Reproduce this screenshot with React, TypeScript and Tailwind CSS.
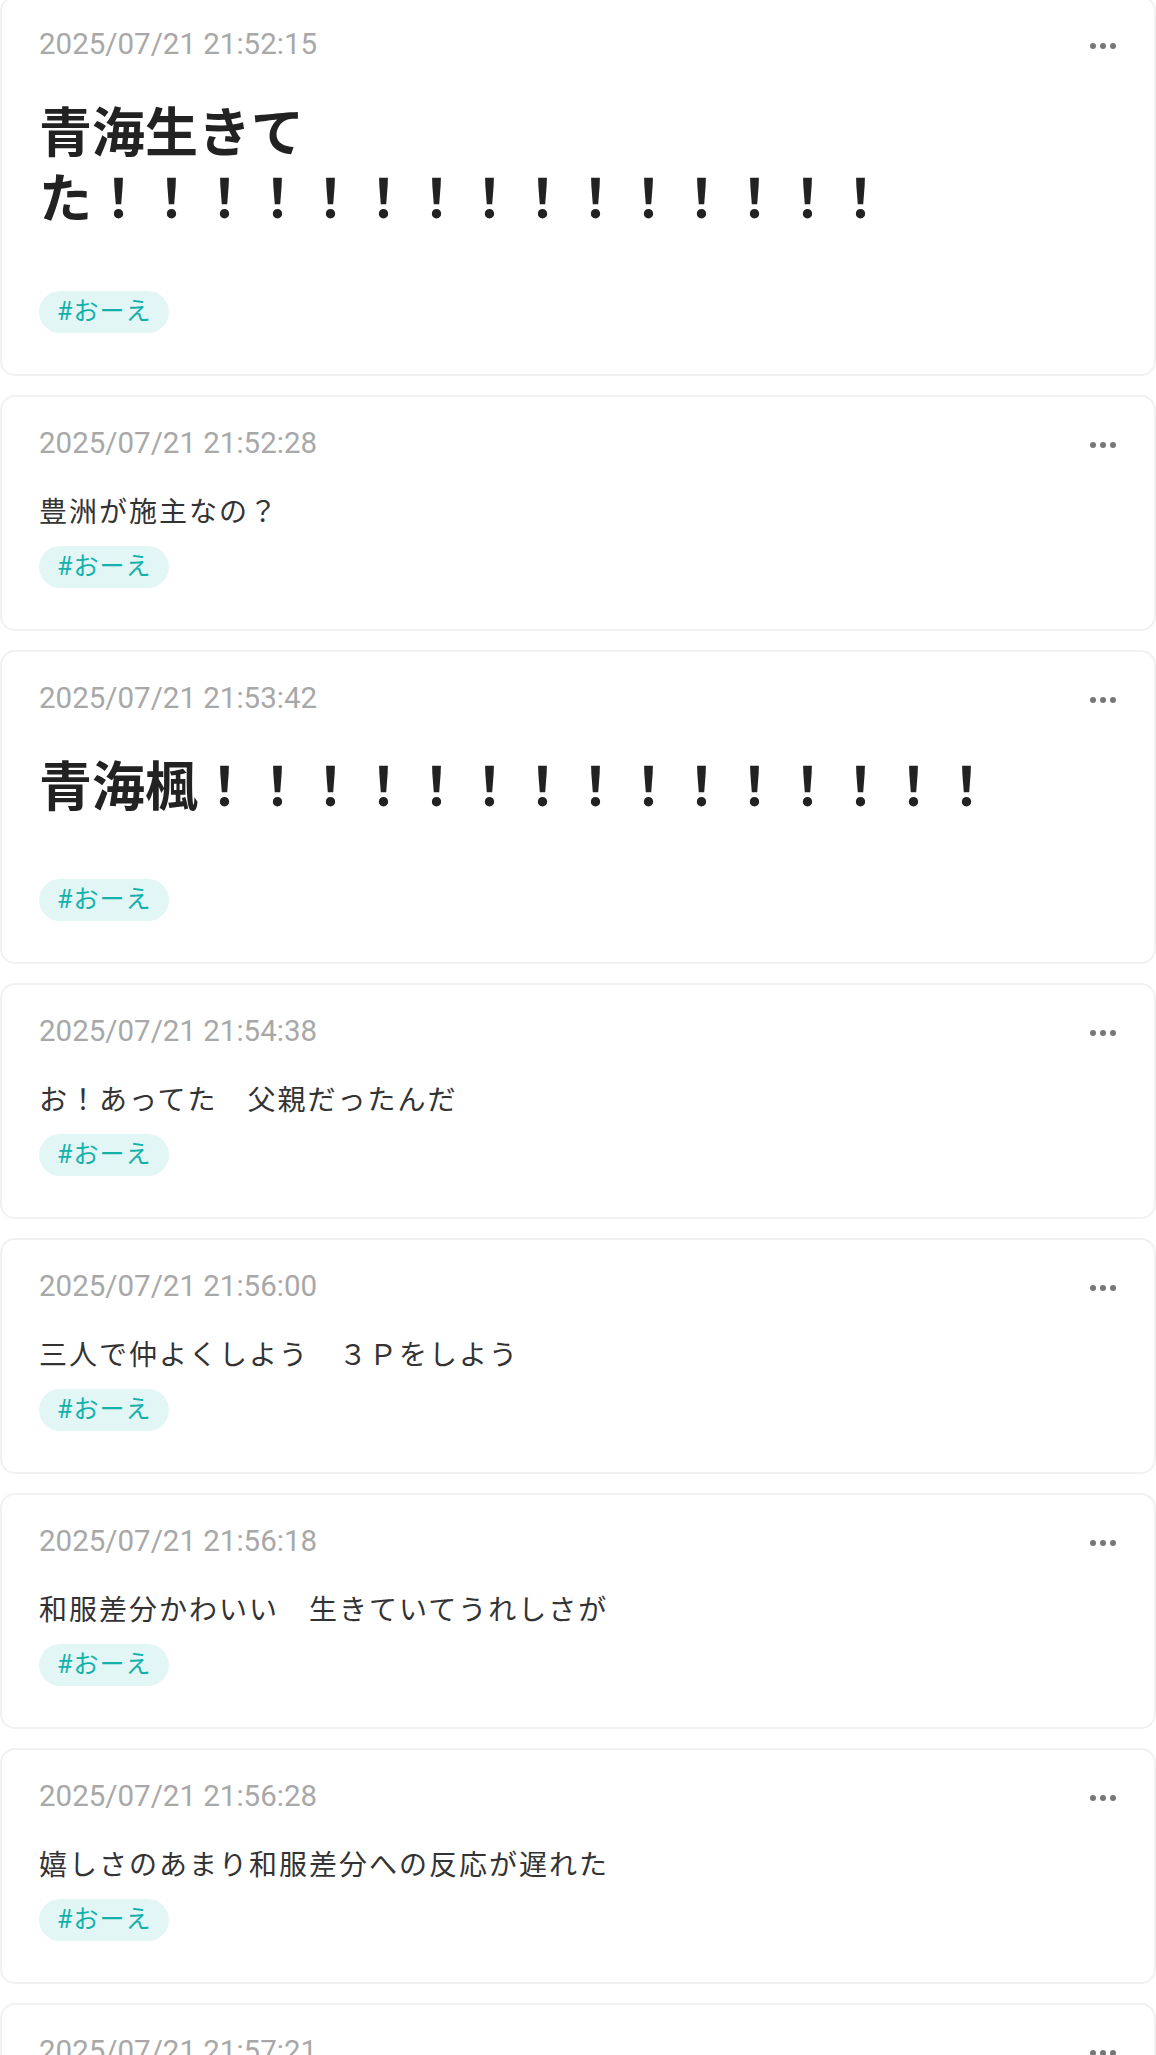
type Post = {
  time: string;
  text: string;
  big?: boolean;
};

const posts: Post[] = [
  { time: "2025/07/21 21:52:15", text: "青海生きてた！！！！！！！！！！！！！！！", big: true },
  { time: "2025/07/21 21:52:28", text: "豊洲が施主なの？" },
  { time: "2025/07/21 21:53:42", text: "青海楓！！！！！！！！！！！！！！！", big: true },
  { time: "2025/07/21 21:54:38", text: "お！あってた　父親だったんだ" },
  { time: "2025/07/21 21:56:00", text: "三人で仲よくしよう　３Ｐをしよう" },
  { time: "2025/07/21 21:56:18", text: "和服差分かわいい　生きていてうれしさが" },
  { time: "2025/07/21 21:56:28", text: "嬉しさのあまり和服差分への反応が遅れた" },
  { time: "2025/07/21 21:57:21", text: "" },
];

function Dots() {
  return (
    <svg width="26" height="8" viewBox="0 0 26 8" className="text-[#777]">
      <circle cx="3" cy="4" r="3" fill="currentColor" />
      <circle cx="13" cy="4" r="3" fill="currentColor" />
      <circle cx="23" cy="4" r="3" fill="currentColor" />
    </svg>
  );
}

function PostCard({ post }: { post: Post }) {
  return (
    <div className="w-full bg-white border-2 border-[#f1f1f1] rounded-[15px] px-[37px] pt-[24px] pb-[41px]">
      {/* Header */}
      <div className="flex items-center justify-between h-[44px]">
        <span className="text-[29.5px] leading-[44px] text-[#a8a8a8]">{post.time}</span>
        <button className="flex items-center h-[44px] pr-[1px] mt-[3px]">
          <Dots />
        </button>
      </div>

      {/* Body */}
      {post.big ? (
        <h1 className="mt-[35px] mb-[47px] text-[53px] leading-[66px] font-bold text-[#222]">
          {post.text}
        </h1>
      ) : (
        <p className="mt-[25px] text-[28px] leading-[45px] tracking-[2px] text-[#333]">{post.text}</p>
      )}

      {/* Tags */}
      <div className="pt-[11px] flex">
        <span className="inline-flex items-center h-[42px] px-[18px] rounded-full bg-[#e3f6f6] text-[#14b1aa] text-[25px] tracking-[1px]">
          #おーえ
        </span>
      </div>
    </div>
  );
}

export default function App() {
  return (
    <div
      className="w-[1156px] h-[2055px] overflow-hidden bg-white"
      style={{ fontFamily: "Roboto, 'Noto Sans CJK JP', sans-serif" }}
    >
      <div className="-mt-[4px] flex flex-col gap-[19px]">
        {posts.map((p) => (
          <PostCard key={p.time} post={p} />
        ))}
      </div>
    </div>
  );
}
